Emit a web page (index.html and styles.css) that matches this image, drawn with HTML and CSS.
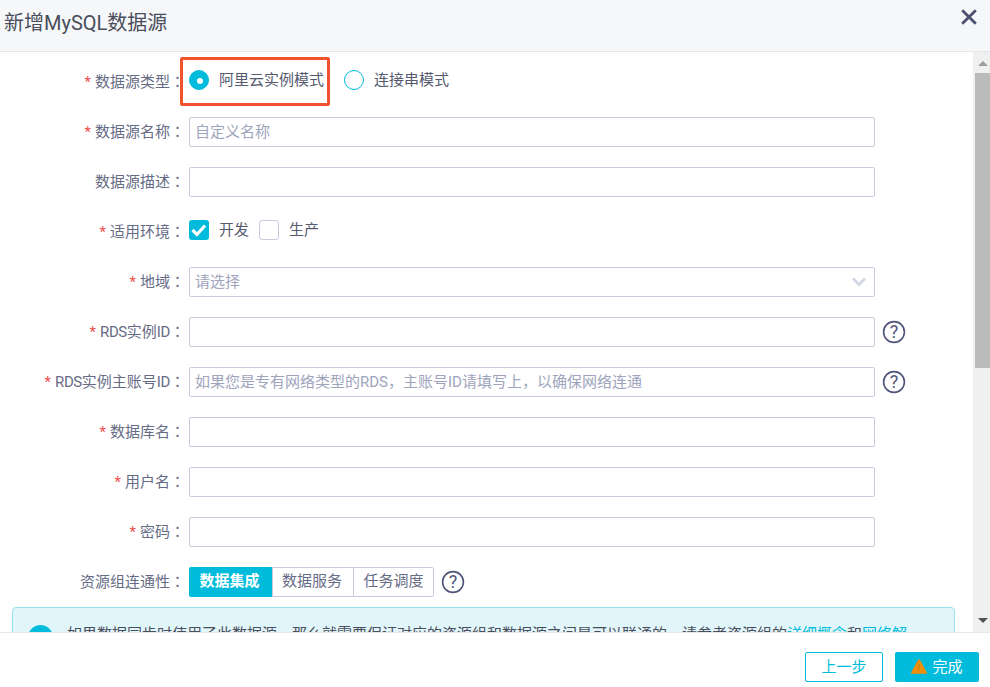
FILE: index.html
```html
<!DOCTYPE html>
<html lang="zh-CN">
<head>
<meta charset="utf-8">
<title>新增MySQL数据源</title>
<link rel="stylesheet" href="styles.css">
</head>
<body>
<div class="modal">
  <header class="head">
    <h1 class="title">新增MySQL数据源</h1>
    <svg class="close" width="18" height="18" viewBox="0 0 18 18"><path d="M2.2 2.2 15.8 15.8M15.8 2.2 2.2 15.8" stroke="#4d5170" stroke-width="2.8" fill="none"/></svg>
  </header>
  <div class="middle">
    <div class="content">
      <form class="form">
        <div class="row">
          <label class="label"><i class="req">*</i>数据源类型<span class="colon">：</span></label>
          <div class="control lifted">
            <span class="radio on"></span><span class="opt">阿里云实例模式</span>
            <span class="radio second"></span><span class="opt">连接串模式</span>
          </div>
        </div>
        <div class="row"><label class="label"><i class="req">*</i>数据源名称<span class="colon">：</span></label><div class="control"><div class="input ph">自定义名称</div></div></div>
        <div class="row"><label class="label">数据源描述<span class="colon">：</span></label><div class="control"><div class="input"></div></div></div>
        <div class="row">
          <label class="label"><i class="req">*</i>适用环境<span class="colon">：</span></label>
          <div class="control lifted">
            <span class="check on"><svg width="20" height="20" viewBox="0 0 20 20"><path d="M3.5 10 8 14.5 16 5.5" stroke="#fff" stroke-width="3.2" fill="none"/></svg></span><span class="opt">开发</span>
            <span class="check second"></span><span class="opt">生产</span>
          </div>
        </div>
        <div class="row">
          <label class="label"><i class="req">*</i>地域<span class="colon">：</span></label>
          <div class="control"><div class="input ph select">请选择<svg width="14" height="10" viewBox="0 0 14 10"><path d="M1 1.5 7 7.5 13 1.5" stroke="#d3d7e6" stroke-width="2.8" fill="none"/></svg></div></div>
        </div>
        <div class="row"><label class="label"><i class="req">*</i><span class="latin">RDS</span>实例<span class="latin">ID</span><span class="colon">：</span></label><div class="control"><div class="input"></div>
          <svg class="help" width="24" height="24" viewBox="0 0 24 24"><circle cx="12" cy="12" r="10.4" stroke="#50547a" stroke-width="1.6" fill="none"/><text x="12" y="18" text-anchor="middle" class="qm">?</text></svg></div></div>
        <div class="row"><label class="label"><i class="req">*</i><span class="latin">RDS</span>实例主账号<span class="latin">ID</span><span class="colon">：</span></label><div class="control"><div class="input ph">如果您是专有网络类型的RDS，主账号ID请填写上，以确保网络连通</div>
          <svg class="help" width="24" height="24" viewBox="0 0 24 24"><circle cx="12" cy="12" r="10.4" stroke="#50547a" stroke-width="1.6" fill="none"/><text x="12" y="18" text-anchor="middle" class="qm">?</text></svg></div></div>
        <div class="row"><label class="label"><i class="req">*</i>数据库名<span class="colon">：</span></label><div class="control"><div class="input"></div></div></div>
        <div class="row"><label class="label"><i class="req">*</i>用户名<span class="colon">：</span></label><div class="control"><div class="input"></div></div></div>
        <div class="row"><label class="label"><i class="req">*</i>密码<span class="colon">：</span></label><div class="control"><div class="input"></div></div></div>
        <div class="row">
          <label class="label">资源组连通性<span class="colon">：</span></label>
          <div class="control">
            <div class="seg"><span class="seg-item active">数据集成</span><span class="seg-item">数据服务</span><span class="seg-item">任务调度</span></div>
            <svg class="help seg-help" width="24" height="24" viewBox="0 0 24 24"><circle cx="12" cy="12" r="10.4" stroke="#50547a" stroke-width="1.6" fill="none"/><text x="12" y="18" text-anchor="middle" class="qm">?</text></svg>
          </div>
        </div>
      </form>
      <div class="alert">
        <span class="alert-icon"></span>
        <p class="alert-text">如果数据同步时使用了此数据源，那么就需要保证对应的资源组和数据源之间是可以联通的，请参考资源组的<a class="link">详细概念</a>和<a class="link">网络解</a></p>
      </div>
      <div class="marker"></div>
    </div>
    <div class="scrollbar">
      <span class="arrow up"></span>
      <div class="track"><div class="thumb"></div></div>
      <span class="arrow down"></span>
    </div>
  </div>
  <footer class="foot">
    <button class="btn ghost" type="button">上一步</button>
    <button class="btn primary" type="button"><svg width="16" height="15" viewBox="0 0 16 15"><path d="M8 1 15.2 14H.8Z" fill="#f0900a" stroke="#f0900a" stroke-width="1.6" stroke-linejoin="round"/><path d="M8 5V10M8 11.2V12.6" stroke="#c47a10" stroke-width="1.1"/></svg>完成</button>
  </footer>
</div>
</body>
</html>
```
FILE: styles.css
```css
* { box-sizing: border-box; }
html, body { margin: 0; height: 100%; }
body {
  font-family: "Roboto", "Noto Sans CJK SC", sans-serif;
  font-size: 15px;
  color: #666c85;
  background: #fff;
  overflow: hidden;
}
.modal { display: flex; flex-direction: column; height: 687px; width: 990px; }
.head {
  height: 52px;
  flex: none;
  display: flex;
  align-items: center;
  justify-content: space-between;
  padding: 0 12px 8px 4px;
  background: #f6f7f9;
  border-bottom: 1px solid #e4e6eb;
}
.title { margin: 0; font-size: 20px; font-weight: 400; color: #4a4e5c; }
.close { display: block; align-self: flex-start; margin-top: 8px; }
.middle { flex: 1; display: flex; min-height: 0; }
.content { position: relative; flex: 1; overflow: hidden; padding-top: 15px; }
.form { display: flex; flex-direction: column; gap: 20px; }
.row { display: flex; height: 30px; align-items: center; }
.label { width: 185px; flex: none; text-align: right; white-space: nowrap; color: #666c85; line-height: 20px; padding-bottom: 1px; }
.colon { font-family: "Noto Sans CJK TC", sans-serif; font-feature-settings: "locl" 0; }
.latin { letter-spacing: -0.4px; }
.req { font-style: normal; color: #f04e4e; margin-right: 4px; }
.control { margin-left: 4px; display: flex; align-items: center; }
.lifted { padding-bottom: 4px; }
.input {
  width: 686px;
  height: 30px;
  border: 1px solid #c7cce0;
  border-radius: 2px;
  padding: 0 5px;
  line-height: 28px;
  background: #fff;
}
.ph { color: #9ea4bd; }
.select { display: flex; justify-content: space-between; align-items: center; padding-right: 8px; }
.radio { width: 20px; height: 20px; border-radius: 50%; border: 1px solid #00bbdb; position: relative; }
.radio.on { background: #00bbdb; }
.radio.on::after {
  content: "";
  position: absolute;
  left: 7px; top: 7px;
  width: 6px; height: 6px;
  border-radius: 50%;
  background: #fff;
}
.radio.second { margin-left: 20px; }
.opt { margin-left: 10px; color: #555a6e; line-height: 20px; padding-bottom: 1px; }
.check { width: 20px; height: 20px; border: 1px solid #c7cce0; border-radius: 3px; }
.check.on { background: #00bbdb; border: 0; }
.check.on svg { display: block; }
.check.second { margin-left: 10px; }
.help { margin-left: 7px; display: block; }
.qm { font-size: 18px; fill: #50547a; font-family: "Roboto", sans-serif; font-weight: 400; }
.seg { display: flex; height: 30px; border: 1px solid #c7cce0; border-radius: 2px; }
.seg-item { width: 81px; line-height: 26px; text-align: center; color: #666c85; padding-right: 2px; }
.seg-item:last-child { width: 80px; padding-right: 0; }
.seg-item + .seg-item { border-left: 1px solid #c7cce0; }
.seg-item.active { margin: -1px 0 -1px -1px; width: 83px; line-height: 28px; background: #00bbdb; color: #fff; font-weight: 700; border-radius: 2px 0 0 2px; }
.seg-help { margin-left: 7px; }
.alert {
  position: relative;
  margin: 10px 18px 0 12px;
  width: 943px;
  height: 60px;
  background: #e1f6fa;
  border: 1px solid #9ae3ee;
  border-radius: 4px;
}
.alert-icon { position: absolute; left: 15px; top: 17px; width: 25px; height: 25px; border-radius: 50%; background: #00bbdb; }
.alert-text { margin: 0; position: absolute; left: 54px; top: 14px; white-space: nowrap; color: #4a4e5c; }
.link { color: #00bbdb; }
.marker { position: absolute; left: 180px; top: 5px; width: 150px; height: 49px; border: 3px solid #f2532f; border-radius: 2px; }
.scrollbar { width: 17px; flex: none; background: #f0f0f0; display: flex; flex-direction: column; align-items: flex-end; }
.arrow { width: 0; height: 0; border-left: 5px solid transparent; border-right: 5px solid transparent; flex: none; margin-right: 2px; }
.arrow.up { border-bottom: 5px solid #9e9e9e; margin-top: 9px; }
.arrow.down { border-top: 5px solid #505050; margin-bottom: 9px; }
.track { flex: 1; width: 100%; padding: 7px 0 0 2px; }
.thumb { height: 295px; background: #bababa; }
.foot {
  height: 55px;
  flex: none;
  display: flex;
  justify-content: flex-end;
  align-items: flex-start;
  gap: 12px;
  padding: 19px 11px 0 0;
  background: #fff;
  border-top: 1px solid #e8e9ee;
}
.btn { height: 30px; width: 78px; border-radius: 2px; font: inherit; display: flex; align-items: center; justify-content: center; gap: 5px; padding: 0 0 4px; }
.ghost { background: #fff; border: 1px solid #00bbdb; color: #00bbdb; }
.primary { width: 84px; background: #00bbdb; border: 0; color: #fff; }
.primary svg { margin-top: 3px; }
```
